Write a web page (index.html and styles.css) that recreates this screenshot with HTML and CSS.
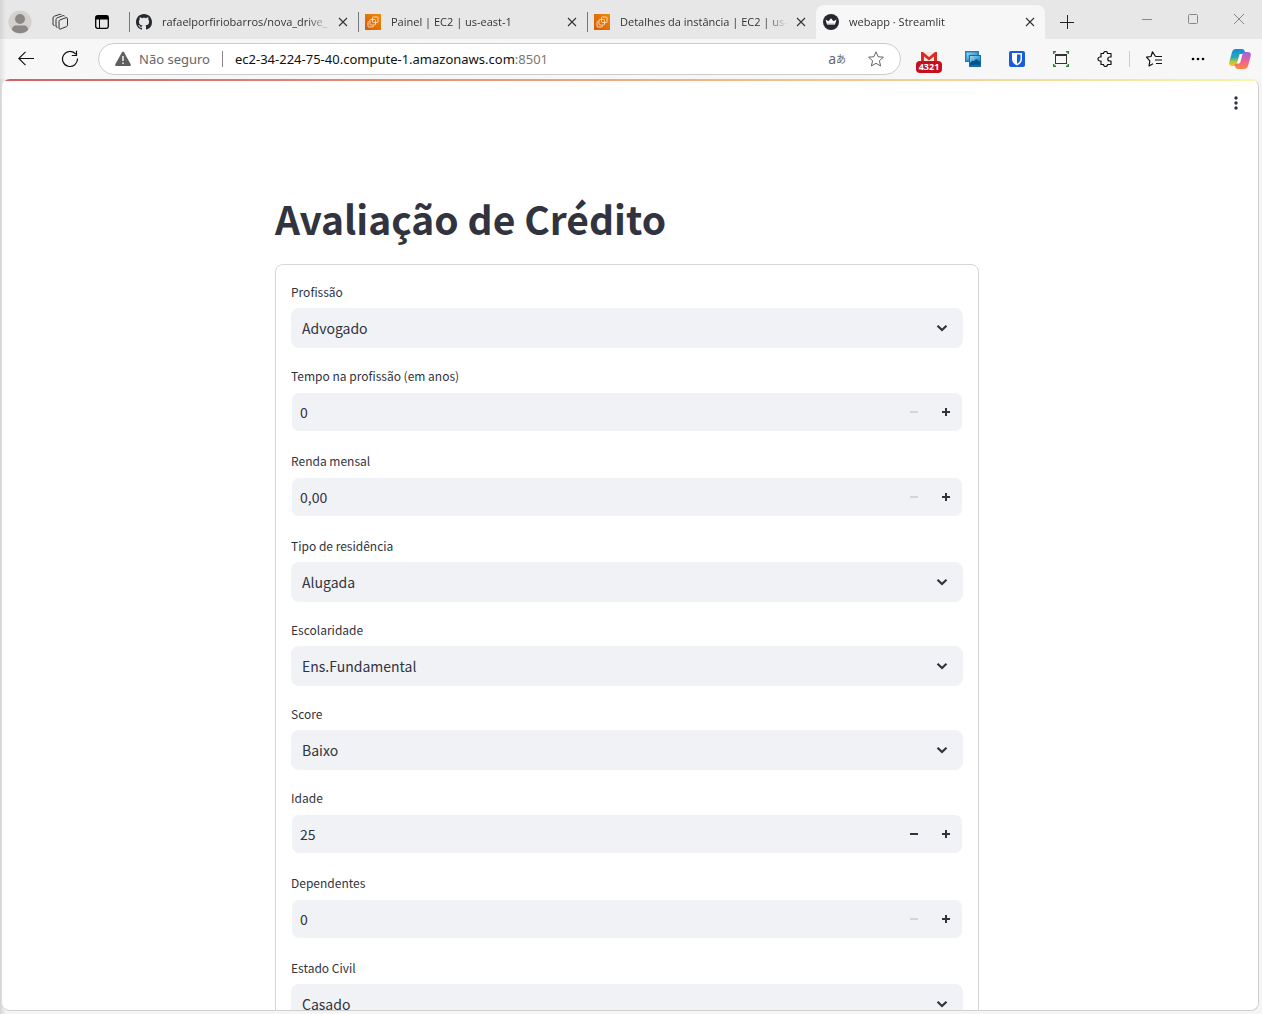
FILE: index.html
```html
<!DOCTYPE html>
<html lang="pt-BR">
<head>
<meta charset="utf-8">
<meta name="viewport" content="width=device-width, initial-scale=1">
<title>webapp · Streamlit</title>
<link rel="stylesheet" href="styles.css">
</head>
<body>
<svg class="defs" aria-hidden="true">
  <defs>
    <linearGradient id="orange" x1="0" y1="1" x2="1" y2="0"><stop offset="0" stop-color="#d45b07"/><stop offset="1" stop-color="#f08a0c"/></linearGradient>
    <linearGradient id="sky" x1="0" y1="0" x2="1" y2="1"><stop offset="0" stop-color="#9adcf5"/><stop offset="1" stop-color="#0c6cae"/></linearGradient>
    <linearGradient id="cool" x1="0" y1="0" x2="0" y2="1"><stop offset="0" stop-color="#1687dc"/><stop offset=".5" stop-color="#2aa9b8"/><stop offset=".75" stop-color="#b5c83c"/><stop offset="1" stop-color="#ffc21a"/></linearGradient>
    <linearGradient id="warm" x1="0" y1="0" x2="0" y2="1"><stop offset="0" stop-color="#9a63e8"/><stop offset=".5" stop-color="#e8609c"/><stop offset="1" stop-color="#ff8a3c"/></linearGradient>
    <symbol id="close" viewBox="0 0 16 16"><path d="M4 4l8 8M12 4l-8 8" fill="none" stroke="currentColor" stroke-width="1.1"/></symbol>
    <symbol id="ec2" viewBox="0 0 16 16"><path fill="url(#orange)" d="M0 0h16v16H0z"/><g fill="none" stroke="#ffe0bd" stroke-width=".9"><rect x="7.500" y="3" width="5.500" height="5.500" rx=".8"/><rect x="5" y="5.500" width="5.500" height="5.500" rx=".8"/><path d="M4.500 7.500H3.700q-.7 0-.7.700v4.100q0 .7.700.700h4.100q.7 0 .7-.7v-.8"/></g></symbol>
    <symbol id="chevron" viewBox="0 0 16 16"><path d="M3.500 5.700L8 10l4.500-4.300" fill="none" stroke="currentColor" stroke-width="2.200"/></symbol>
    <symbol id="minus" viewBox="0 0 8 8"><path d="M0 3h8v2H0z" fill="currentColor"/></symbol>
    <symbol id="plus" viewBox="0 0 8 8"><path d="M0 3h3V0h2v3h3v2H5v3H3V5H0z" fill="currentColor"/></symbol>
  </defs>
</svg>

<header class="browser">
  <div class="tabstrip">
    <div class="strip-actions">
      <button class="strip-button" aria-label="Perfil"><svg width="24" height="24" viewBox="0 0 24 24"><circle cx="12" cy="12" r="11.500" fill="#d3d0cd"/><circle cx="12" cy="9" r="5" fill="#8a8785"/><path d="M4 20c0-3.500 2-4.500 4-4.500h8c2 0 4 1 4 4.500a11.500 11.500 0 0 1-16 0z" fill="#8a8785"/></svg></button>
      <button class="strip-button" aria-label="Workspaces"><svg width="18" height="18" viewBox="0 0 18 18" fill="none" stroke="#333" stroke-linejoin="round"><path d="M8 8.300q0-1 1-1.400l6-2.200q1.500-.4 1.500 1v6.500q0 1-1 1.400l-6 2.400q-1.500.5-1.500-1zM6.500 14.300q-1.500.4-1.500-1.300V6.500q0-1.200 1.200-1.700l6-2.200q1.200-.3 1.500.8M3.500 12.500Q2 12.800 2 11V5q0-1.200 1.200-1.700l5.500-2q1.300-.3 1.600.6"/></svg></button>
      <button class="strip-button" aria-label="Guias verticais"><svg width="14" height="14" viewBox="0 0 14 14"><rect x=".7" y=".7" width="12.600" height="12.600" rx="1.800" fill="none" stroke="#000" stroke-width="1.300"/><path d="M1 1h12v3.500H1z"/><path d="M4.500 4v9" stroke="#000"/></svg></button>
    </div>
    <nav class="tabs" aria-label="Guias">
      <div class="tab">
        <svg class="favicon" viewBox="0 0 16 16"><path fill="#24292f" d="M8 0C3.580 0 0 3.580 0 8c0 3.540 2.290 6.530 5.470 7.590.4.070.55-.17.55-.38 0-.19-.01-.82-.01-1.490-2.010.37-2.530-.49-2.690-.94-.09-.23-.48-.94-.82-1.130-.28-.15-.68-.52-.01-.53.63-.01 1.080.58 1.230.82.72 1.210 1.870.87 2.330.66.07-.52.28-.87.51-1.070-1.780-.2-3.640-.89-3.640-3.950 0-.87.31-1.590.82-2.150-.08-.2-.36-1.020.08-2.120 0 0 .67-.21 2.200.82.64-.18 1.320-.27 2-.27s1.360.09 2 .27c1.530-1.040 2.200-.82 2.200-.82.44 1.100.16 1.920.08 2.120.51.56.82 1.270.82 2.150 0 3.070-1.870 3.750-3.650 3.950.29.25.54.73.54 1.480 0 1.070-.01 1.930-.01 2.200 0 .21.15.46.55.38A8.010 8.010 0 0 0 16 8c0-4.420-3.580-8-8-8z"/></svg>
        <a class="tab-title" href="#">rafaelporfiriobarros/nova_drive_</a>
        <button class="tab-close" aria-label="Fechar guia"><svg><use href="#close"/></svg></button>
      </div>
      <div class="tab">
        <svg class="favicon"><use href="#ec2"/></svg>
        <a class="tab-title" href="#">Painel | EC2 | us-east-1</a>
        <button class="tab-close" aria-label="Fechar guia"><svg><use href="#close"/></svg></button>
      </div>
      <div class="tab">
        <svg class="favicon"><use href="#ec2"/></svg>
        <a class="tab-title" href="#">Detalhes da instância | EC2 | us-</a>
        <button class="tab-close" aria-label="Fechar guia"><svg><use href="#close"/></svg></button>
      </div>
      <div class="tab tab-active">
        <svg class="favicon" viewBox="0 0 16 16"><circle cx="8" cy="8" r="8" fill="#262730"/><path d="M2.500 5.500l3 1.800L8 4.300l2.500 3 3-1.800-1.500 5H4z" fill="#fff"/><path d="M4.300 9.600h7.400l-.4 1.200H4.700z" fill="#aaa"/></svg>
        <a class="tab-title" href="#">webapp · Streamlit</a>
        <button class="tab-close" aria-label="Fechar guia"><svg><use href="#close"/></svg></button>
      </div>
    </nav>
    <button class="new-tab" aria-label="Nova guia"><svg width="14" height="14" viewBox="0 0 14 14"><path d="M0 7.500h14M7.500 0v14" stroke="#222"/></svg></button>
    <div class="window-controls">
      <button aria-label="Minimizar"><svg width="10" height="10" viewBox="0 0 10 10"><path d="M0 5.500h10" stroke="#888"/></svg></button>
      <button aria-label="Maximizar"><svg width="10" height="10" viewBox="0 0 10 10"><rect x=".5" y=".5" width="9" height="9" rx="1" fill="none" stroke="#888"/></svg></button>
      <button aria-label="Fechar"><svg width="10" height="10" viewBox="0 0 10 10"><path d="M0 0l10 10M10 0L0 10" stroke="#888"/></svg></button>
    </div>
  </div>

  <div class="toolbar">
    <button class="tool" aria-label="Voltar"><svg width="16" height="16" viewBox="0 0 16 16" fill="none" stroke="#111" stroke-width="1.100"><path d="M16 7.500H.8M7.500 .8L.8 7.500l6.700 6.700"/></svg></button>
    <button class="tool" aria-label="Atualizar"><svg width="18" height="18" viewBox="0 0 18 18" fill="none" stroke="#111" stroke-width="1.200"><path d="M16.500 8.500A7.500 7.500 0 1 1 14.800 4.200M15.500.8v4.700h-4.700"/></svg></button>
    <div class="address">
      <svg width="16" height="16" viewBox="0 0 16 16"><path d="M7 1.200q1-1.600 2 0l6.700 12q.6 1.600-1 1.800H1.300q-1.600-.2-1-1.800z" fill="#5f5f5f"/><path d="M8 5v5M8 11.500v1.600" stroke="#fff" stroke-width="1.400"/></svg>
      <span class="security">Não seguro</span>
      <a class="url" href="#">ec2-34-224-75-40.compute-1.amazonaws.com<span class="port">:8501</span></a>
      <button class="translate" aria-label="Traduzir"><span class="latin">a</span><span class="kana">あ</span></button>
      <button class="favorite" aria-label="Adicionar aos favoritos"><svg width="16" height="16" viewBox="0 0 16 16" fill="none" stroke="#666" stroke-linejoin="round"><path d="M8 .8l2.100 4.900 5.300.5-4 3.500 1.200 5.300L8 12.300 3.400 15l1.200-5.300-4-3.500 5.300-.5z"/></svg></button>
    </div>
    <button class="tool gmail" aria-label="Gmail"><svg width="16" height="12" viewBox="0 0 16 12"><path d="M0 0h16v12H0z" fill="#f3e9e7"/><path d="M0 12V0h2l6 5 6-5h2v12h-3V4.500L8 8.500 3 4.500V12z" fill="#dc2b22"/></svg><span class="badge">4321</span></button>
    <button class="tool" aria-label="Imagens"><svg width="16" height="16" viewBox="0 0 16 16"><path d="M0 0h14v11H0z" fill="#1783bd"/><path d="M1.500 1.500h11v8h-11z" fill="url(#sky)"/><path d="M4 4h12v12H4z" fill="#0b70ad"/><path d="M5 5h10v9H5z" fill="url(#sky)"/><path d="M5 12q2-3 4-2 2-3 4-1l2 2v3H5z" fill="#07548a"/></svg></button>
    <button class="tool" aria-label="Bitwarden"><svg width="16" height="16" viewBox="0 0 16 16"><rect width="16" height="16" rx="2" fill="#175ddc"/><path d="M3 2h10v6q0 4-5 6.500Q3 12 3 8z" fill="#fff"/><path d="M8 3.500h3.500V8q0 2.700-3.500 4.800z" fill="#175ddc"/></svg></button>
    <button class="tool" aria-label="Captura"><svg width="16" height="16" viewBox="0 0 16 16" fill="none"><path d="M.7 3V.7H3M13 .7h2.300V3M15.300 13v2.300H13M3 15.300H.7V13" stroke="#2e7d32" stroke-width="1.400"/><rect x="2.500" y="3.500" width="11" height="9" stroke="#333"/><path d="M2 4h12" stroke="#333" stroke-width="2"/></svg></button>
    <button class="tool" aria-label="Extensões"><svg width="16" height="16" viewBox="0 0 16 16" fill="none" stroke="#111" stroke-width="1.200" stroke-linejoin="round"><path d="M4 2.500h2.500a2 2 0 0 1 4 0H14V6h-1.200a2 2 0 1 0 0 4H14v3.500h-3.500a2 2 0 0 1-4 0H4V10H3a2 2 0 1 1 0-4h1z"/></svg></button>
    <span class="tool-divider"></span>
    <button class="tool" aria-label="Favoritos"><svg width="16" height="16" viewBox="0 0 16 16" fill="none" stroke="#111" stroke-width="1.200" stroke-linejoin="round"><path d="M9.500 5.500L6.500.8 5 5.500.5 6.200l3.300 3.600L3 15l4-2.200M9.500 5.500H16M9 9h7M10 12.500h6"/></svg></button>
    <button class="tool" aria-label="Configurações e mais"><svg width="14" height="4" viewBox="0 0 14 4"><circle cx="2" cy="2" r="1.300"/><circle cx="7" cy="2" r="1.300"/><circle cx="12" cy="2" r="1.300"/></svg></button>
    <button class="tool copilot" aria-label="Copilot"><svg width="22" height="22" viewBox="0 0 22 22"><path d="M7 1h6q2 0 2.700 2L16.500 6h-3q-2 0-2.600 2L8.500 16Q8 18 6 18H3q-3.500 0-2.700-4L3 4q1-3 4-3z" fill="url(#cool)"/><path d="M15 21H9q-2 0-2.700-2L5.500 16h3q2 0 2.600-2l2.400-8q.5-2 2.500-2h3q3.500 0 2.700 4L19 18q-1 3-4 3z" fill="url(#warm)"/><path d="M10.500 6h3l-2.500 9H8z" fill="#fff" opacity=".85"/></svg></button>
  </div>
</header>

<div class="viewport">
  <button class="app-menu" aria-label="Menu"><svg width="4" height="14" viewBox="0 0 4 14" fill="#31333f"><circle cx="2" cy="2" r="1.700"/><circle cx="2" cy="7" r="1.700"/><circle cx="2" cy="12" r="1.700"/></svg></button>
  <main class="content">
    <h1>Avaliação de Crédito</h1>
    <form class="form">
      <div class="field">
        <label for="profissao">Profissão</label>
        <div class="select-box"><select id="profissao"><option>Advogado</option></select><svg class="chevron"><use href="#chevron"/></svg></div>
      </div>
      <div class="field">
        <label for="tempo">Tempo na profissão (em anos)</label>
        <div class="number-box"><input id="tempo" type="text" inputmode="numeric" value="0"><button type="button" aria-label="Diminuir" disabled><svg><use href="#minus"/></svg></button><button type="button" aria-label="Aumentar"><svg><use href="#plus"/></svg></button></div>
      </div>
      <div class="field">
        <label for="renda">Renda mensal</label>
        <div class="number-box"><input id="renda" type="text" inputmode="decimal" value="0,00"><button type="button" aria-label="Diminuir" disabled><svg><use href="#minus"/></svg></button><button type="button" aria-label="Aumentar"><svg><use href="#plus"/></svg></button></div>
      </div>
      <div class="field">
        <label for="residencia">Tipo de residência</label>
        <div class="select-box"><select id="residencia"><option>Alugada</option></select><svg class="chevron"><use href="#chevron"/></svg></div>
      </div>
      <div class="field">
        <label for="escolaridade">Escolaridade</label>
        <div class="select-box"><select id="escolaridade"><option>Ens.Fundamental</option></select><svg class="chevron"><use href="#chevron"/></svg></div>
      </div>
      <div class="field">
        <label for="score">Score</label>
        <div class="select-box"><select id="score"><option>Baixo</option></select><svg class="chevron"><use href="#chevron"/></svg></div>
      </div>
      <div class="field">
        <label for="idade">Idade</label>
        <div class="number-box"><input id="idade" type="text" inputmode="numeric" value="25"><button type="button" aria-label="Diminuir"><svg><use href="#minus"/></svg></button><button type="button" aria-label="Aumentar"><svg><use href="#plus"/></svg></button></div>
      </div>
      <div class="field">
        <label for="dependentes">Dependentes</label>
        <div class="number-box"><input id="dependentes" type="text" inputmode="numeric" value="0"><button type="button" aria-label="Diminuir" disabled><svg><use href="#minus"/></svg></button><button type="button" aria-label="Aumentar"><svg><use href="#plus"/></svg></button></div>
      </div>
      <div class="field">
        <label for="civil">Estado Civil</label>
        <div class="select-box"><select id="civil"><option>Casado</option></select><svg class="chevron"><use href="#chevron"/></svg></div>
      </div>
    </form>
  </main>
</div>
</body>
</html>
```
FILE: styles.css
```css
* { box-sizing: border-box; }

body {
  margin: 0;
  height: 100vh;
  display: flex;
  flex-direction: column;
  overflow: hidden;
  background: linear-gradient(to right, #d4d4d4, #f5f5f5 6px);
  font-family: "Open Sans", "Noto Sans", sans-serif;
  color: #31333f;
}

button {
  border: 0;
  padding: 0;
  background: none;
  font: inherit;
  color: inherit;
  display: flex;
  align-items: center;
  justify-content: center;
}

a { color: inherit; text-decoration: none; }

svg { display: block; flex: none; }

.defs { position: absolute; width: 0; height: 0; }

/* Browser chrome */
.browser { flex: none; }

.tabstrip {
  display: flex;
  height: 39px;
  padding-top: 5px;
  background: linear-gradient(to right, #d4d4d4, #e7e7e7 6px);
}

.strip-actions { display: flex; width: 129px; }
.strip-button { width: 40px; height: 34px; }
.strip-button:last-child { width: 44px; }

.tabs { display: flex; flex: 0 1 916px; min-width: 0; }

.tab {
  display: flex;
  align-items: center;
  flex: 1 1 0;
  min-width: 0;
  padding: 0 7px;
  background: linear-gradient(#777, #777) no-repeat left center / 1px 20px;
  font-size: 11px;
  color: #333;
}

.tab-active {
  background: #f7f7f7;
  border-radius: 8px 8px 0 0;
}

.favicon { width: 16px; height: 16px; margin-right: 10px; }

.tab-title {
  flex: 1;
  min-width: 0;
  margin-right: 4px;
  overflow: hidden;
  white-space: nowrap;
  line-height: 16px;
  mask-image: linear-gradient(to left, transparent, #000 24px);
}

.tab-close svg { width: 16px; height: 16px; }

.new-tab { width: 44px; }

.window-controls { display: flex; margin-left: auto; height: 28px; }
.window-controls button { width: 46px; }

.toolbar {
  display: flex;
  align-items: center;
  height: 40px;
  padding: 0 2px 0 4px;
  background: linear-gradient(to right, #e2e2e2, #f7f7f7 6px);
}

.tool { width: 44px; height: 32px; flex: none; }
.copilot { width: 40px; }

.tool-divider {
  width: 1px;
  height: 16px;
  margin: 0 2px;
  background: #ccc;
}

.address {
  display: flex;
  align-items: center;
  flex: 1;
  min-width: 0;
  height: 32px;
  margin: 0 6px;
  padding: 0 16px;
  border: 1px solid #ccc;
  border-radius: 16px;
  background: #fff;
  font-family: "Noto Sans", sans-serif;
  font-size: 13px;
}

.security {
  margin-left: 8px;
  padding-right: 12px;
  border-right: 1px solid #888;
  line-height: 16px;
  color: #666;
}

.url {
  flex: 1;
  margin-left: 12px;
  color: #111;
  white-space: nowrap;
}

.port { color: #777; }

.translate { color: #666; margin-right: 22px; line-height: 16px; }
.latin { font-size: 14px; }
.kana { font-family: "Noto Sans CJK JP", sans-serif; font-size: 10px; }

.gmail { position: relative; align-items: flex-start; padding-top: 9px; }

.badge {
  position: absolute;
  left: 9px;
  bottom: 2px;
  width: 26px;
  height: 12px;
  border-radius: 4px;
  background: #c50f1f;
  color: #fff;
  font-size: 9px;
  font-weight: 700;
  line-height: 12px;
}

/* Page shown in the tab */
.viewport {
  position: relative;
  flex: 1;
  min-height: 0;
  margin: 0 3px 3px 2px;
  padding-right: 6px;
  overflow: hidden;
  border: solid #d0d0d0;
  border-width: 0 1px 1px 0;
  border-radius: 8px;
  background: #fff;
  font-family: "Noto Sans CJK JP", sans-serif;
}

.viewport::before {
  content: "";
  position: absolute;
  top: 0;
  left: 0;
  right: 0;
  height: 2px;
  background: linear-gradient(to right, #d65f63, #e78b75 30%, #f3bf88 62%, #f7f5a8);
}

.app-menu {
  position: absolute;
  top: 8px;
  right: 6px;
  width: 32px;
  height: 32px;
}

.content {
  max-width: 704px;
  margin: 0 auto;
  padding-top: 113px;
}

h1 {
  margin: 0 0 20px;
  font-size: 39px;
  font-weight: 700;
  line-height: 52px;
}

.form {
  display: grid;
  gap: 16px;
  padding: 15px;
  border: 1px solid #d6d6d9;
  border-radius: 8px;
}

.field label {
  display: block;
  margin-bottom: 4px;
  font-size: 12px;
  line-height: 24px;
}

.select-box, .number-box {
  display: flex;
  border-radius: 8px;
  background: #f0f2f6;
}

.select-box { position: relative; height: 40px; }

.number-box {
  height: 40px;
  margin-bottom: 1px;
  border: 1px solid transparent;
  background-clip: padding-box;
}

select, input {
  flex: 1;
  min-width: 0;
  border: 0;
  background: none;
  color: inherit;
  font-family: inherit;
  font-size: 14px;
}

select { appearance: none; padding: 0 40px 0 11px; }
input { padding: 0 8px; }

.chevron {
  position: absolute;
  top: 12px;
  right: 13px;
  width: 16px;
  height: 16px;
  pointer-events: none;
}

.number-box button { width: 32px; }
.number-box button:disabled { color: #d3d5da; }
.number-box button svg { width: 8px; height: 8px; }
```
